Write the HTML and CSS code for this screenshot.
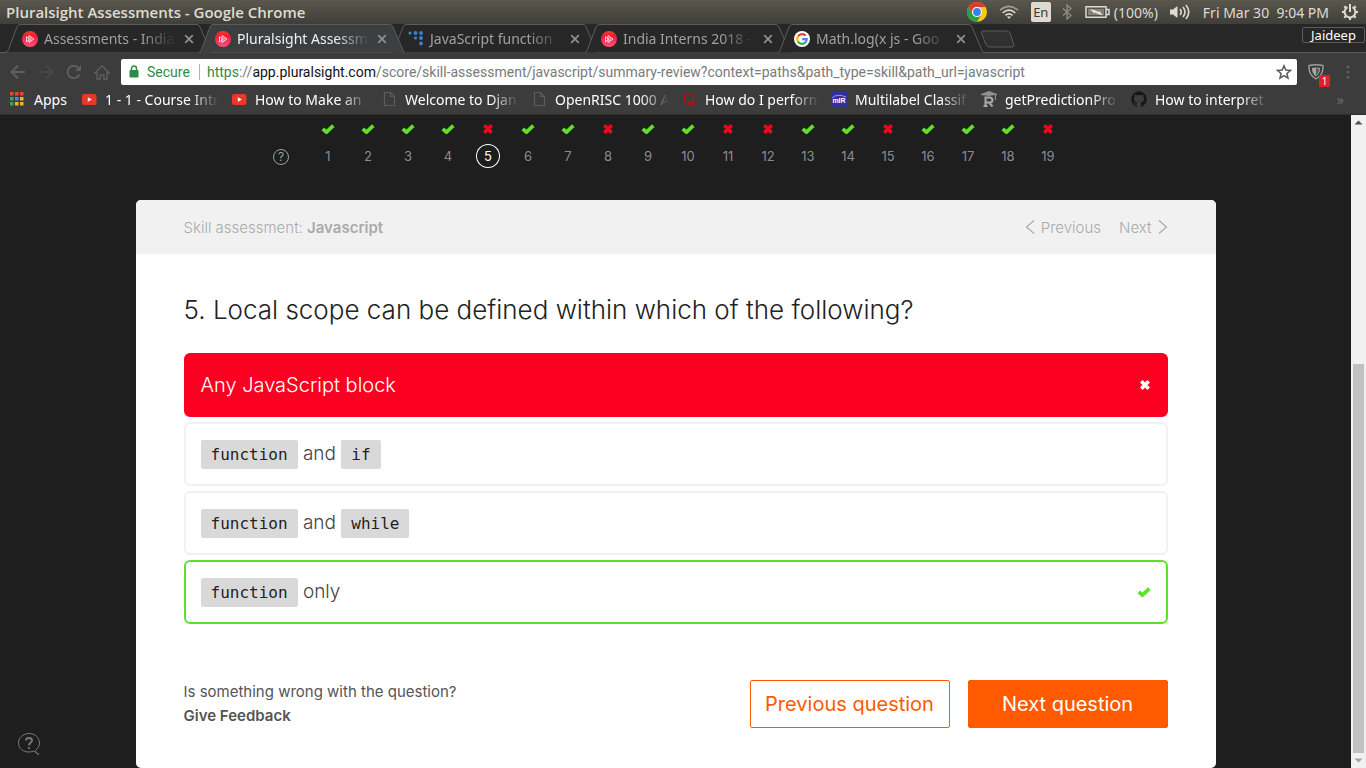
FILE: index.html
```html
<!DOCTYPE html>
<html lang="en">
<head>
<meta charset="utf-8">
<meta name="viewport" content="width=device-width, initial-scale=1">
<title>Pluralsight Assessments</title>
<link rel="stylesheet" href="styles.css">
</head>
<body>
<svg class="defs" aria-hidden="true">
  <linearGradient id="ps-fill" x1="0" y1="0" x2="0" y2="1"><stop offset="0" stop-color="#f5421c"/><stop offset=".3" stop-color="#f5183c"/><stop offset="1" stop-color="#fb5578"/></linearGradient>
  <symbol id="ps" viewBox="0 0 16 16"><circle cx="8" cy="8" r="8" fill="url(#ps-fill)"/><path d="M4.500 5.500v5.500M4.500 6l2.500 1v2.500l-2.500 1M7 4.500v7l5-3.500zM9 6v4" fill="none" stroke="#fff" stroke-opacity=".85" stroke-width=".9"/></symbol>
  <symbol id="dots" viewBox="0 0 16 16"><g fill="#3b82cf"><circle cx="2" cy="2" r="1.600"/><circle cx="7.500" cy="2" r="1.900"/><circle cx="13" cy="2" r="1.900"/><circle cx="7.500" cy="7" r="1.600"/><circle cx="13" cy="7" r="1.900"/><circle cx="13" cy="12.500" r="1.900"/></g></symbol>
  <symbol id="google" viewBox="0 0 16 16"><circle cx="8" cy="8" r="8" fill="#fff"/><g fill="none" stroke-width="2.200"><path d="M11.600 4.700A4.700 4.700 0 0 0 4 5.500" stroke="#ea4335"/><path d="M4 5.500a4.700 4.700 0 0 0 0 5" stroke="#fbbc05"/><path d="M4 10.500a4.700 4.700 0 0 0 7.300 1" stroke="#34a853"/><path d="M11.300 11.500a4.700 4.700 0 0 0 1.400-3.400H8.200" stroke="#4285f4"/></g></symbol>
  <symbol id="tab-shape" viewBox="0 0 206 29" preserveAspectRatio="none"><path d="M0 28.500C2 28 2 26 3 24L11 3Q12 .5 14 .5H191Q193 .5 194 3L203 24Q204 28 206 28.500" stroke="#5c5c5c" stroke-width="1"/></symbol>
  <symbol id="close" viewBox="0 0 10 10"><path d="M1.200 1.200l7.600 7.600M8.800 1.200L1.200 8.800" stroke="#909090" stroke-width="1.700" fill="none"/></symbol>
  <symbol id="yt" viewBox="0 0 16 16"><rect x="1" y="3" width="14.500" height="11" rx="2.500" fill="#e8382c"/><path d="M6.800 6.200v4.600l4-2.300z" fill="#fff"/></symbol>
  <symbol id="file" viewBox="0 0 16 16"><path d="M3.500 1.500h6l4 4v9h-10zM9.500 1.500v4h4" fill="none" stroke="#5c5c5c" stroke-width="1.200"/></symbol>
  <symbol id="ok" viewBox="0 0 14 12"><path d="M1.800 5.800l3.600 3.400L12.300 2.600" fill="none" stroke="#5fe029" stroke-width="3.700" stroke-linejoin="round"/></symbol>
  <symbol id="no" viewBox="0 0 12 12"><path d="M2.300 2.300l7.400 7.400M9.700 2.300l-7.400 7.400" fill="none" stroke="currentColor" stroke-width="3.600"/></symbol>
</svg>

<header class="system-bar">
  <span class="window-title">Pluralsight Assessments - Google Chrome</span>
  <div class="indicators">
    <svg class="i-chrome" viewBox="0 0 20 20"><circle cx="10" cy="10" r="10" fill="#fbc916"/><path d="M1.340 5A10 10 0 0 1 18.660 5H10a5 5 0 0 0-4.300 7.500z" fill="#de3b30"/><path d="M1.340 5A10 10 0 0 0 10 20l4.330-7.500A5 5 0 0 1 5.700 12.500z" fill="#2a9d4c"/><circle cx="10" cy="10" r="5" fill="#fff"/><circle cx="10" cy="10" r="3.900" fill="#3e7fea"/></svg>
    <svg class="i-wifi" viewBox="0 0 20 14"><g fill="none" stroke="#dfdbd2" stroke-width="1.600"><path d="M1 5.200Q10-2.500 19 5.200" opacity=".55"/><path d="M3.700 7.800q6.300-5.200 12.600 0"/><path d="M6.400 10.300q3.600-2.900 7.200 0"/></g><path d="M7.800 11.500h4.400L10 14z" fill="#dfdbd2"/></svg>
    <span class="lang">En</span>
    <svg class="i-bt" viewBox="0 0 10 16"><path d="M1 4.500l8 7-4 3.500V1l4 3.500-8 7" fill="none" stroke="#8d8a83" stroke-width="1.400"/></svg>
    <svg class="i-batt" viewBox="0 0 25 12"><path d="M1 .8h20v10.400H1zM21 3.500h3v5h-3" fill="none" stroke="#dfdbd2" stroke-width="1.500"/><path d="M3 2.800h16v6.400H3z" fill="#85827a"/><path d="M5 3l7 2 .5 1.500L14 5l4 4.500-6.500-2L11 6 9.500 7.500z" fill="#f0ece2"/></svg>
    <span class="percent">(100%)</span>
    <svg class="i-sound" viewBox="0 0 20 16"><path d="M0 5.500h3L7.500 2v12L3 10.500H0z" fill="#dfdbd2"/><path d="M10 5q2.500 3 0 6M13 3q4 5 0 10M16 1q5.500 7 0 14" fill="none" stroke="#dfdbd2" stroke-width="1.600"/></svg>
    <time class="clock">Fri Mar 30&nbsp; 9:04 PM</time>
    <svg class="i-gear" viewBox="0 0 18 18"><g fill="none" stroke="#dfdbd2"><path d="M6.500 4.200a5.400 5.400 0 1 0 5 0" stroke-width="2"/><path d="M9 1v8" stroke-width="2"/><path d="M1 9h2M15 9h2M9 15v2M3.300 3.300l1.500 1.500M14.700 3.300l-1.500 1.500M3.300 14.700l1.500-1.500M14.700 14.700l-1.500-1.500" stroke-width="2.200"/></g></svg>
  </div>
</header>

<nav class="tab-strip" aria-label="Tabs">
  <div class="tab"><svg class="tab-bg"><use href="#tab-shape"/></svg><svg class="fav"><use href="#ps"/></svg><a class="tab-text" href="#">Assessments - India</a><button class="tab-close" aria-label="Close tab"><svg><use href="#close"/></svg></button></div>
  <div class="tab active"><svg class="tab-bg"><use href="#tab-shape"/></svg><svg class="fav"><use href="#ps"/></svg><a class="tab-text" href="#">Pluralsight Assessm</a><button class="tab-close" aria-label="Close tab"><svg><use href="#close"/></svg></button></div>
  <div class="tab"><svg class="tab-bg"><use href="#tab-shape"/></svg><svg class="fav"><use href="#dots"/></svg><a class="tab-text" href="#">JavaScript function</a><button class="tab-close" aria-label="Close tab"><svg><use href="#close"/></svg></button></div>
  <div class="tab"><svg class="tab-bg"><use href="#tab-shape"/></svg><svg class="fav"><use href="#ps"/></svg><a class="tab-text" href="#">India Interns 2018 -</a><button class="tab-close" aria-label="Close tab"><svg><use href="#close"/></svg></button></div>
  <div class="tab"><svg class="tab-bg"><use href="#tab-shape"/></svg><svg class="fav"><use href="#google"/></svg><a class="tab-text" href="#">Math.log(x js - Goo</a><button class="tab-close" aria-label="Close tab"><svg><use href="#close"/></svg></button></div>
  <button class="new-tab" aria-label="New tab"><svg viewBox="0 0 36 18"><path d="M3 1h24q2 0 3 2l4 12q0 2-2 2H10q-3 0-4-2L1.500 3Q1 1 3 1z" fill="#303030" stroke="#5c5c5c"/></svg></button>
  <button class="profile">Jaideep</button>
</nav>

<div class="toolbar">
  <div class="nav-buttons">
    <button aria-label="Back"><svg viewBox="0 0 16 16"><path d="M15 8H2M8 1.500L1.500 8 8 14.500" fill="none" stroke="#5e5e5e" stroke-width="2"/></svg></button>
    <button aria-label="Forward"><svg viewBox="0 0 16 16"><path d="M1 8h13M8 1.500L14.500 8 8 14.500" fill="none" stroke="#484848" stroke-width="2"/></svg></button>
    <button aria-label="Reload"><svg viewBox="0 0 16 16"><path d="M13.500 10.500A6.200 6.200 0 1 1 12.600 4" fill="none" stroke="#5e5e5e" stroke-width="2"/><path d="M15 1v6H9z" fill="#5e5e5e"/></svg></button>
    <button aria-label="Home"><svg viewBox="0 0 16 16"><path d="M.8 9L8 1.800 15.200 9H13v6H9.800v-4H6.200v4H3V9z" fill="none" stroke="#5e5e5e" stroke-width="1.500"/></svg></button>
  </div>
  <div class="omnibox">
    <svg class="i-lock" viewBox="0 0 10 13"><path d="M2.500 6V3.500a2.500 2.500 0 0 1 5 0V6" fill="none" stroke="#2e8b47" stroke-width="1.500"/><rect x="0.500" y="5" width="9" height="7.500" rx=".8" fill="#2e8b47"/></svg>
    <span class="secure">Secure</span>
    <div class="url" role="textbox" aria-label="Address"><span class="scheme">https</span>://<span class="host">app.pluralsight.com</span>/score/skill-assessment/javascript/summary-review?context=paths&amp;path_type=skill&amp;path_url=javascript</div>
    <button class="star" aria-label="Bookmark"><svg viewBox="0 0 16 16"><path d="M8 1.800l1.800 4.300 4.700.4-3.600 3 1.100 4.600L8 11.600l-4 2.500 1.100-4.600-3.600-3 4.700-.4z" fill="none" stroke="#5a5a5a" stroke-width="1.500"/></svg></button>
  </div>
  <button class="shield" aria-label="Shield extension"><svg viewBox="0 0 16 16"><path d="M1 1.500q7-1.500 14 0Q15.500 11 8 15 .5 11 1 1.500z" fill="none" stroke="#9c9c9c" stroke-width="1.400"/><path d="M4 4q4-1 8 0 0 5.500-4 8.500-4-3-4-8.500z" fill="#a8a8a8"/><path d="M8 4v8q2.700-3 3-7z" fill="#555"/></svg><span class="badge">1</span></button>
  <button class="menu" aria-label="Menu"><svg viewBox="0 0 4 14"><g fill="#5e5e5e"><circle cx="2" cy="2" r="1.600"/><circle cx="2" cy="7" r="1.600"/><circle cx="2" cy="12" r="1.600"/></g></svg></button>
</div>

<nav class="bookmarks" aria-label="Bookmarks">
  <a class="apps" href="#"><svg viewBox="0 0 14 14"><g fill="#e8462f"><path d="M0 0h3.500v3.500H0zM5 0h3.500v3.500H5zM10 0h3.500v3.500H10z"/></g><path d="M0 5h3.500v3.500H0zM0 10h3.500v3.500H0z" fill="#3fa450"/><path d="M5 5h3.500v3.500H5z" fill="#4384f3"/><path d="M10 5h3.500v3.500H10zM5 10h3.500v3.500H5zM10 10h3.500v3.500H10z" fill="#f0b42d"/></svg>Apps</a>
  <a class="mark" href="#"><svg><use href="#yt"/></svg><span>1 - 1 - Course Intr</span></a>
  <a class="mark" href="#"><svg><use href="#yt"/></svg><span>How to Make an</span></a>
  <a class="mark" href="#"><svg><use href="#file"/></svg><span>Welcome to Djan</span></a>
  <a class="mark" href="#"><svg><use href="#file"/></svg><span>OpenRISC 1000 A</span></a>
  <a class="mark" href="#"><svg viewBox="0 0 16 16"><path d="M8 2.500c3 0 4.700 2.200 4.700 5.200S11 13 8 13s-4.700-2.300-4.700-5.300S5 2.500 8 2.500zM7 10.500c2 0 2 3.500 5 3.500 1 0 1.600-.6 1.700-1.700" fill="none" stroke="#b01217" stroke-width="1.700"/></svg><span>How do I perform</span></a>
  <a class="mark" href="#"><svg viewBox="0 0 16 16"><path d="M0 0h16v15.500H0z" fill="#2f2fa3"/><path d="M1 7q5-5 14-1" fill="none" stroke="#9b9bdc"/><text x="8" y="11.500" text-anchor="middle" class="mlr">mlR</text></svg><span>Multilabel Classif</span></a>
  <a class="mark" href="#"><svg viewBox="0 0 16 16"><path d="M0 3l8-3 8 3-1 2v4h-1V4L8 5 0 4z" fill="#929292"/><path d="M4.500 15.500V6.500h4q3 0 3 2.500t-3 2.500h-4M8 11.500l3.500 4M2.500 15.200h4" fill="none" stroke="#aaa" stroke-width="2"/></svg><span>getPredictionPro</span></a>
  <a class="mark" href="#"><svg viewBox="0 0 16 16"><path d="M8 .2a8 8 0 0 0-2.500 15.500c.4.100.5-.2.500-.4v-1.500c-2.200.5-2.700-1-2.700-1-.4-.9-.9-1.200-.9-1.200-.7-.5.100-.5.100-.5.800.1 1.200.9 1.200.9.700 1.200 1.900.9 2.300.6.100-.5.300-.8.500-1-1.800-.2-3.600-.9-3.600-4 0-.9.300-1.600.8-2.100-.1-.2-.4-1 .1-2.100 0 0 .7-.2 2.200.8a7.500 7.500 0 0 1 4 0c1.500-1 2.200-.8 2.200-.8.500 1.100.200 1.900.1 2.100.5.500.8 1.200.8 2.100 0 3.100-1.900 3.800-3.600 4 .3.200.5.700.5 1.400v2.300c0 .2.100.5.500.4A8 8 0 0 0 8 .2z" fill="#161616"/></svg><span>How to interpret</span></a>
  <button class="overflow" aria-label="More bookmarks">»</button>
</nav>

<div class="viewport">
  <main class="page">
    <nav class="progress" aria-label="Questions">
      <button class="legend" aria-label="Legend">?</button>
      <ol>
        <li><svg><use href="#ok"/></svg><a href="#">1</a></li>
        <li><svg><use href="#ok"/></svg><a href="#">2</a></li>
        <li><svg><use href="#ok"/></svg><a href="#">3</a></li>
        <li><svg><use href="#ok"/></svg><a href="#">4</a></li>
        <li><svg><use href="#no"/></svg><a class="current" href="#" aria-current="step">5</a></li>
        <li><svg><use href="#ok"/></svg><a href="#">6</a></li>
        <li><svg><use href="#ok"/></svg><a href="#">7</a></li>
        <li><svg><use href="#no"/></svg><a href="#">8</a></li>
        <li><svg><use href="#ok"/></svg><a href="#">9</a></li>
        <li><svg><use href="#ok"/></svg><a href="#">10</a></li>
        <li><svg><use href="#no"/></svg><a href="#">11</a></li>
        <li><svg><use href="#no"/></svg><a href="#">12</a></li>
        <li><svg><use href="#ok"/></svg><a href="#">13</a></li>
        <li><svg><use href="#ok"/></svg><a href="#">14</a></li>
        <li><svg><use href="#no"/></svg><a href="#">15</a></li>
        <li><svg><use href="#ok"/></svg><a href="#">16</a></li>
        <li><svg><use href="#ok"/></svg><a href="#">17</a></li>
        <li><svg><use href="#ok"/></svg><a href="#">18</a></li>
        <li><svg><use href="#no"/></svg><a href="#">19</a></li>
      </ol>
    </nav>
    <section class="card">
      <header class="card-head">
        <p>Skill assessment: <strong>Javascript</strong></p>
        <div class="pager">
          <a href="#"><svg viewBox="0 0 10 14"><path d="M9 .5L1.500 7 9 13.500" fill="none" stroke="#aaa" stroke-width="1.200"/></svg>Previous</a>
          <a href="#">Next<svg viewBox="0 0 10 14"><path d="M1 .5L8.500 7 1 13.500" fill="none" stroke="#aaa" stroke-width="1.200"/></svg></a>
        </div>
      </header>
      <div class="card-body">
        <h1>5. Local scope can be defined within which of the following?</h1>
        <ul class="answers">
          <li class="wrong"><span>Any JavaScript block</span><svg><use href="#no"/></svg></li>
          <li><span><code>function</code> and <code>if</code></span></li>
          <li><span><code>function</code> and <code>while</code></span></li>
          <li class="right"><span><code>function</code> only</span><svg><use href="#ok"/></svg></li>
        </ul>
        <footer class="card-foot">
          <p>Is something wrong with the question?<br><a href="#">Give Feedback</a></p>
          <div class="actions">
            <button class="btn outline">Previous question</button>
            <button class="btn solid">Next question</button>
          </div>
        </footer>
      </div>
    </section>
    <button class="help" aria-label="Help"><svg viewBox="0 0 24 24"><path d="M18.500 18.500C20.800 16.800 22.500 14 22.500 11 22.500 5.500 17.700 1.500 12 1.500S1.500 5.500 1.500 11 6.300 20 12 20c1.700 0 3.500-.4 5-1 1.500 2 3 2.800 5 3.500-1.700-1.300-2.700-2.500-3.500-4z" fill="none" stroke="#777" stroke-width="1"/><path d="M9 8.500c0-3.300 6-3.300 6 0 0 2-3 2.300-3 5M12 15.200v1.800" fill="none" stroke="#777" stroke-width="1.900"/></svg></button>
  </main>
  <div class="scrollbar" aria-hidden="true">
    <svg viewBox="0 0 15 15"><path d="M3.500 9.500h8l-4-4z" fill="#505050"/></svg>
    <div class="track"></div><div class="thumb"></div>
    <svg viewBox="0 0 15 15"><path d="M3.500 5.500h8l-4 4z" fill="#a3a3a3"/></svg>
  </div>
</div>
</body>
</html>
```
FILE: styles.css
```css
* { box-sizing: border-box; }
body {
  margin: 0;
  min-height: 100vh;
  display: flex;
  flex-direction: column;
  background: #1e1e1e;
  font-family: "Noto Sans", "Open Sans", sans-serif;
  font-size: 14px;
  color: #fff;
}
a { color: inherit; text-decoration: none; }
button { border: 0; padding: 0; background: none; color: inherit; font: inherit; cursor: pointer; }
svg { display: block; flex: none; }
.defs { position: absolute; width: 0; height: 0; }

.system-bar {
  display: flex;
  justify-content: space-between;
  align-items: center;
  height: 24px;
  padding: 0 7px 0 6px;
  background: linear-gradient(#5a574e, #3f3e39);
  color: #dfdbd2;
}
.window-title { font-family: "Open Sans", sans-serif; font-size: 15px; font-weight: 600; }
.indicators { display: flex; align-items: center; }
.i-chrome { width: 20px; height: 20px; margin-right: 12px; }
.i-wifi { width: 20px; height: 14px; margin-right: 12px; }
.lang {
  width: 20px;
  height: 20px;
  margin-right: 11px;
  border-radius: 2px;
  background: #dfdbd2;
  color: #3c3b37;
  font-size: 13px;
  line-height: 20px;
  text-align: center;
}
.i-bt { width: 10px; height: 16px; margin-right: 13px; }
.i-batt { width: 25px; height: 12px; margin-right: 4px; }
.percent { margin-right: 12px; }
.i-sound { width: 20px; height: 16px; margin-right: 13px; }
.clock { margin-right: 12px; }
.i-gear { width: 18px; height: 18px; }

.tab-strip {
  display: flex;
  align-items: flex-start;
  height: 29px;
  padding-left: 6px;
  background: #272727;
  box-shadow: inset 0 -1px #5c5c5c;
}
.tab {
  position: relative;
  display: flex;
  align-items: center;
  flex: 0 1 206px;
  min-width: 0;
  height: 29px;
  margin-right: -13px;
  padding: 0 18px 0 16px;
  color: #a0a0a0;
}
.tab-bg { position: absolute; top: 0; left: 0; width: 100%; height: 100%; fill: #272727; }
.active { z-index: 1; color: #f0f0f0; }
.active .tab-bg { fill: #3c3f40; }
.fav { position: relative; width: 16px; height: 16px; margin-right: 2px; }
.tab-text {
  position: relative;
  flex: 1;
  overflow: hidden;
  padding-left: 4px;
  white-space: nowrap;
  -webkit-mask-image: linear-gradient(to right, #000 75%, transparent);
  mask-image: linear-gradient(to right, #000 75%, transparent);
}
.tab-close { position: relative; margin-left: 8px; }
.tab-close svg { width: 10px; height: 10px; }
.new-tab { margin: 6px 0 0 9px; }
.new-tab svg { width: 36px; height: 18px; }
.profile {
  width: 63px;
  height: 16px;
  margin: 3px 1px 0 auto;
  border: 1px solid #5c5c5c;
  border-radius: 2px;
  font-size: 13px;
  line-height: 14px;
}

.toolbar {
  display: flex;
  align-items: center;
  height: 35px;
  padding: 2px 16px 0 10px;
  background: #3c3c3c;
}
.nav-buttons { display: flex; gap: 12px; margin-right: 11px; }
.nav-buttons svg { width: 16px; height: 16px; }
.omnibox {
  display: flex;
  align-items: center;
  flex: 1;
  min-width: 0;
  height: 26px;
  padding: 0 5px 0 8px;
  border-radius: 2px;
  background: #fff;
  color: #7a7a7a;
  font-family: Roboto, sans-serif;
}
.i-lock { width: 10px; height: 13px; margin-right: 8px; }
.secure { width: 44px; margin-right: 8px; color: #2e8b47; }
.url {
  flex: 1;
  overflow: hidden;
  padding-left: 8px;
  box-shadow: inset 1px 0 #b4b4b4;
  white-space: nowrap;
}
.scheme { color: #2e8b47; }
.host { color: #111; }
.star svg { width: 16px; height: 16px; }
.shield { position: relative; margin-left: 11px; }
.shield svg { width: 16px; height: 16px; }
.badge {
  position: absolute;
  left: 11px;
  top: 11px;
  width: 11px;
  height: 12px;
  border-radius: 1px;
  background: #dc2127;
  font-size: 10px;
  line-height: 12px;
}
.menu { margin-left: 22px; }
.menu svg { width: 4px; height: 14px; }

.bookmarks {
  display: flex;
  align-items: center;
  height: 27px;
  padding: 0 22px 4px 10px;
  background: #3c3c3c;
  border-bottom: 1px solid #303030;
  white-space: nowrap;
}
.apps { display: flex; align-items: center; gap: 10px; width: 71px; }
.apps svg { width: 14px; height: 14px; }
.mark { display: flex; align-items: center; gap: 8px; width: 138px; margin-right: 12px; }
.mark svg { width: 16px; height: 16px; }
.mark span {
  flex: 1;
  overflow: hidden;
  -webkit-mask-image: linear-gradient(to right, #000 75%, transparent);
  mask-image: linear-gradient(to right, #000 75%, transparent);
}
.mlr { font: 700 7px "Liberation Sans", sans-serif; fill: #fff; }
.overflow { margin-left: auto; color: #6c6c6c; }

.viewport { display: flex; flex: 1; font-family: Inter, "Open Sans", sans-serif; }
.page { position: relative; flex: 1; background: #1e1e1e; }
.progress { display: flex; justify-content: center; padding: 7px 10px 32px 0; }
.legend {
  align-self: flex-end;
  width: 16px;
  height: 16px;
  margin: 0 19px 3px 0;
  border: 1px solid #a0a0a0;
  border-radius: 50%;
  color: #a0a0a0;
  font-size: 12px;
  line-height: 14px;
}
.progress ol { display: flex; margin: 0; padding: 0; list-style: none; }
.progress li { display: flex; flex-direction: column; align-items: center; gap: 8px; width: 40px; color: #f0051e; }
.progress li svg { width: 14px; height: 14px; padding: 1px 0; }
.progress li a {
  width: 24px;
  height: 24px;
  color: #8c8c8c;
  font-size: 13px;
  line-height: 24px;
  text-align: center;
}
.progress li .current { color: #fff; border-radius: 50%; box-shadow: inset 0 0 0 1px #fff; }

.card {
  max-width: 1080px;
  margin: 0 auto;
  border-radius: 5px;
  background: #fff;
  overflow: hidden;
}
.card-head {
  display: flex;
  justify-content: space-between;
  align-items: center;
  height: 54px;
  padding: 0 48px;
  background: #f1f1f1;
  color: #aaa;
  font-size: 15px;
  font-weight: 300;
}
.card-head p { margin: 0; }
.card-head strong { font-weight: 600; }
.pager { display: flex; gap: 18px; }
.pager a { display: flex; align-items: center; gap: 6px; }
.pager svg { width: 10px; height: 14px; }
.card-body { padding: 40px 48px; color: #222; }
h1 { margin: 0 0 27px; font-size: 26px; font-weight: 300; line-height: 32px; }
.answers { display: flex; flex-direction: column; gap: 5px; margin: 0 0 56px; padding: 0; list-style: none; }
.answers li {
  display: flex;
  justify-content: space-between;
  align-items: center;
  height: 64px;
  padding: 0 15px;
  border: 2px solid #f1f1f1;
  border-radius: 6px;
  color: #444;
  font-size: 19px;
  font-weight: 300;
}
.answers .wrong { border-color: #fc0022; background: #fc0022; color: #fff; font-size: 20px; }
.answers .right { border-color: #5fe029; }
.answers svg { width: 14px; height: 12px; }
.answers .wrong svg { width: 12px; }
code {
  display: inline-block;
  padding: 0 10px;
  border-radius: 2px;
  background: #d9d9d9;
  color: #222;
  font: 400 16px/29px "DejaVu Sans Mono", monospace;
}
.card-foot { display: flex; justify-content: space-between; }
.card-foot p { margin: 0; color: #555; font-size: 15px; line-height: 24px; }
.card-foot p a { font-weight: 600; }
.actions { display: flex; gap: 18px; }
.btn { width: 200px; height: 48px; border: 1px solid #ff5a00; border-radius: 2px; font-size: 20px; }
.outline { color: #ff5a00; }
.solid { background: #ff5a00; color: #fff; }
.help { position: absolute; left: 17px; bottom: 12px; }
.help svg { width: 24px; height: 24px; }

.scrollbar { display: flex; flex-direction: column; width: 15px; background: #f1f1f1; }
.scrollbar svg { width: 15px; height: 15px; }
.track { flex: 234; }
.thumb { flex: 389; margin: 0 2px; background: #c1c1c1; }
```
